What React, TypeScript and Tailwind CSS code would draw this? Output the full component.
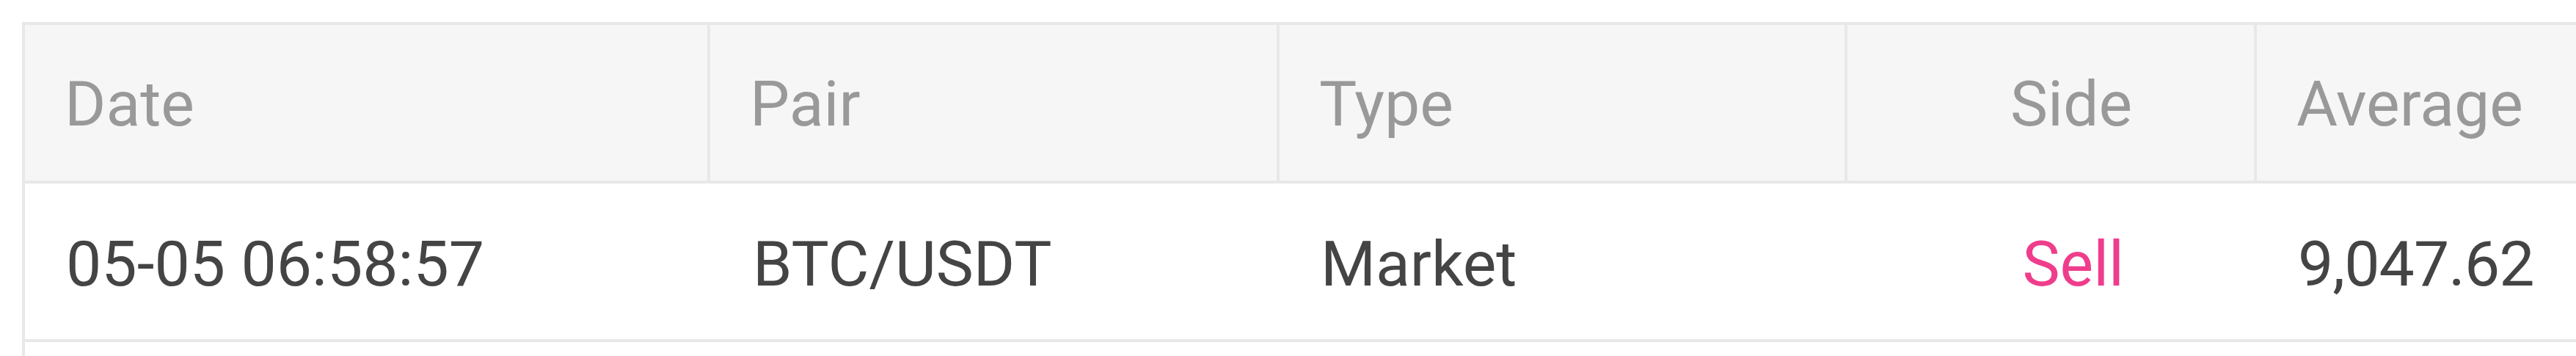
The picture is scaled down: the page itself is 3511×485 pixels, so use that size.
const columns = [
  { key: 'date', label: 'Date', width: 'w-[934px]', align: 'left' },
  { key: 'pair', label: 'Pair', width: 'w-[776px]', align: 'left' },
  { key: 'type', label: 'Type', width: 'w-[774px]', align: 'left' },
  { key: 'side', label: 'Side', width: 'w-[558px]', align: 'right' },
  { key: 'average', label: 'Average', width: 'w-[600px]', align: 'left' },
];

const orders = [
  { id: 1, date: '05-05 06:58:57', pair: 'BTC/USDT', type: 'Market', side: 'Sell', average: '9,047.62' },
];

export default function App() {
  return (
    <div className="w-[3511px] h-[485px] overflow-hidden bg-white pt-[30px] pl-[30px] font-['Roboto',sans-serif] text-[86px] leading-none">
      <div className="w-[3700px] border-l-4 border-t-4 border-[#e8e8e8]">
        {/* header */}
        <div className="flex h-[216px] bg-[#f6f6f6] border-b-4 border-[#e8e8e8] text-[#999999]">
          {columns.map((col) => (
            <div
              key={col.key}
              className={`${col.width} shrink-0 h-full border-r-4 border-[#e8e8e8] flex items-center pt-[4px] ${
                col.align === 'right' ? 'justify-end pr-[166px]' : 'pl-[54px]'
              }`}
            >
              {col.label}
            </div>
          ))}
        </div>

        {/* rows */}
        {orders.map((o) => (
          <div key={o.id} className="flex h-[216px] bg-white border-b-4 border-[#e8e8e8] text-[#444444]">
            <div className="w-[934px] shrink-0 flex items-center pl-[56px] pt-[8px]">{o.date}</div>
            <div className="w-[776px] shrink-0 flex items-center pl-[58px] pt-[8px]">{o.pair}</div>
            <div className="w-[774px] shrink-0 flex items-center pl-[56px] pt-[8px]">{o.type}</div>
            <div className="w-[558px] shrink-0 flex items-center justify-end pr-[181px] pt-[8px] text-[#ef3d8c]">
              {o.side}
            </div>
            <div className="w-[600px] shrink-0 flex items-center pl-[56px] pt-[8px] tracking-[-1px]">{o.average}</div>
          </div>
        ))}
        <div className="h-[40px] bg-white" />
      </div>
    </div>
  );
}
